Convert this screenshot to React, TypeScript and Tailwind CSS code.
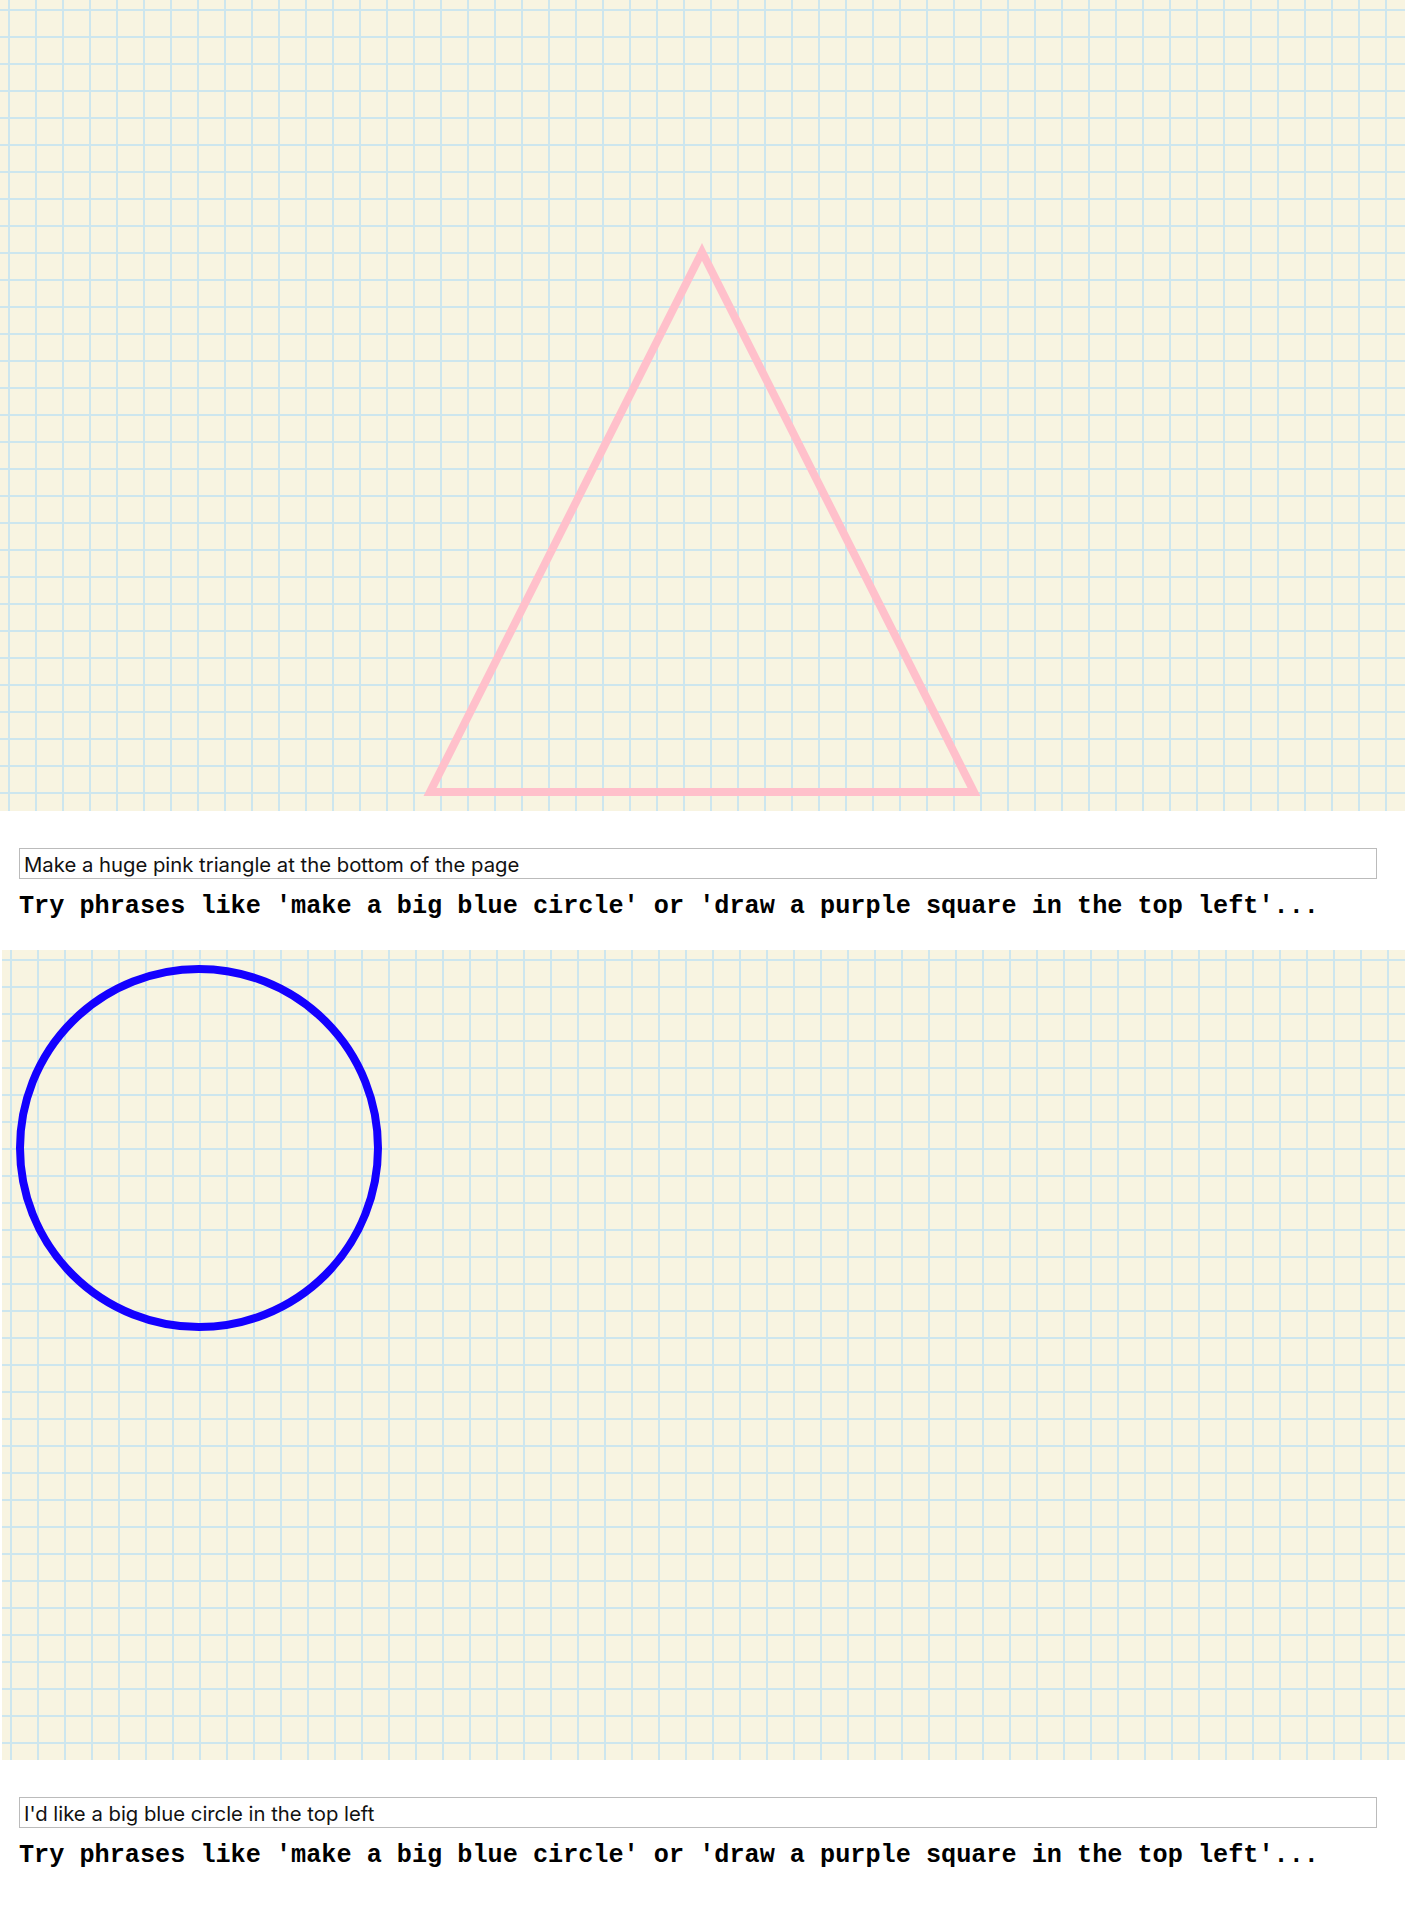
import React, { useState } from 'react';

type Shape =
  | { kind: 'triangle'; points: string; color: string }
  | { kind: 'circle'; cx: number; cy: number; r: number; color: string };

interface Panel {
  id: number;
  prompt: string;
  shape: Shape;
  offset: string;
}

const HINT = "Try phrases like 'make a big blue circle' or 'draw a purple square in the top left'...";

const panels: Panel[] = [
  {
    id: 1,
    prompt: 'Make a huge pink triangle at the bottom of the page',
    shape: { kind: 'triangle', points: '702,252 974,792 430,792', color: '#ffc0cb' },
    offset: 'ml-0 h-[811px]',
  },
  {
    id: 2,
    prompt: "I'd like a big blue circle in the top left",
    shape: { kind: 'circle', cx: 197, cy: 198, r: 179, color: '#1400ff' },
    offset: 'ml-[2px] h-[810px]',
  },
];

const GraphPaper: React.FC<{ shape: Shape; className: string }> = ({ shape, className }) => (
  <div
    className={`relative bg-[#f8f4e1] bg-[linear-gradient(to_right,#cde6ee_2px,transparent_2px),linear-gradient(to_bottom,#cde6ee_2px,transparent_2px)] bg-size-[27px_27px] bg-position-[8px_9px] ${className}`}
  >
    <svg className="absolute inset-0 w-full h-full">
      {shape.kind === 'triangle' ? (
        <polygon points={shape.points} fill="none" stroke={shape.color} strokeWidth={8} />
      ) : (
        <circle cx={shape.cx} cy={shape.cy} r={shape.r} fill="none" stroke={shape.color} strokeWidth={8} />
      )}
    </svg>
  </div>
);

const PromptBlock: React.FC<{ panel: Panel }> = ({ panel }) => {
  const [value, setValue] = useState(panel.prompt);

  return (
    <section>
      <GraphPaper shape={panel.shape} className={panel.offset} />

      <div className="pt-[37px] pl-[19px] pr-[28px]">
        <input
          type="text"
          value={value}
          onChange={(e) => setValue(e.target.value)}
          className="w-full h-[31px] border border-[#bbbbbb] bg-white pl-[4px] pt-[2px] text-[20.3px] text-[#111] outline-none font-['Inter','Liberation_Sans',sans-serif]"
        />
        <p className="mt-[13px] mb-[28px] leading-[30px] text-[25.2px] font-bold text-black whitespace-nowrap font-['Liberation_Mono','Courier_New',monospace]">
          {HINT}
        </p>
      </div>
    </section>
  );
};

export default function App() {
  return (
    <div className="bg-white min-h-screen">
      {panels.map((p) => (
        <PromptBlock key={p.id} panel={p} />
      ))}
    </div>
  );
}
